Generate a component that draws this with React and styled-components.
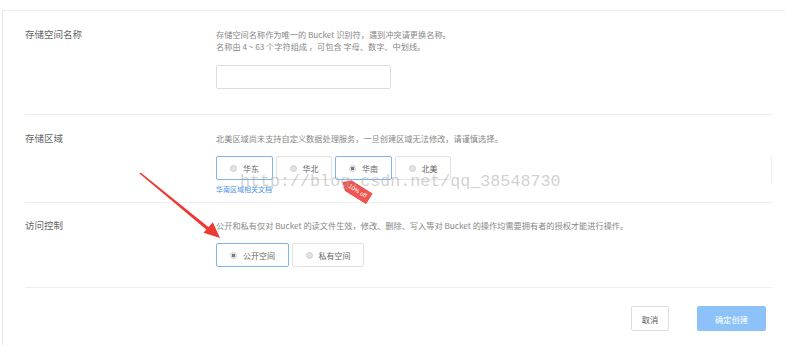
import React, { useState } from 'react';
import styled, { createGlobalStyle } from 'styled-components';

const GlobalStyle = createGlobalStyle`
  html, body {
    margin: 0;
    padding: 0;
    background: #fff;
  }
  body {
    font-family: "Noto Sans CJK SC", "Noto Sans", sans-serif;
    color: #555;
  }
`;

const regions = [
  { id: 'east', name: '华东', outlined: true },
  { id: 'north', name: '华北' },
  { id: 'south', name: '华南', outlined: true },
  { id: 'us', name: '北美' },
];

const access = [
  { id: 'public', name: '公开空间' },
  { id: 'private', name: '私有空间' },
];

const App = () => {
  const [region, setRegion] = useState('south');
  const [acl, setAcl] = useState('public');

  return (
    <Page>
      <GlobalStyle />
      <Card>
        <Section>
          <Label>存储空间名称</Label>
          <Content>
            <Desc>
              存储空间名称作为唯一的 Bucket 识别符，遇到冲突请更换名称。<br />
              名称由 4 ~ 63 个字符组成 ，可包含 字母、数字、中划线。
            </Desc>
            <NameInput type="text" />
          </Content>
        </Section>

        <Section $bottom={8}>
          <Label>存储区域</Label>
          <Content>
            <Desc>北美区域尚未支持自定义数据处理服务，一旦创建区域无法修改，请谨慎选择。</Desc>
            <RadioRow $edge>
              {regions.map((r) => (
                <RadioButton
                  key={r.id}
                  $active={r.outlined || region === r.id}
                  onClick={() => setRegion(r.id)}
                >
                  <Dot $checked={region === r.id} />
                  {r.name}
                </RadioButton>
              ))}
            </RadioRow>
            <DocLink href="#">华南区域相关文档</DocLink>
          </Content>
        </Section>

        <Section $bottom={20} $top={16}>
          <Label>访问控制</Label>
          <Content>
            <Desc>公开和私有仅对 Bucket 的读文件生效，修改、删除、写入等对 Bucket 的操作均需要拥有者的授权才能进行操作。</Desc>
            <RadioRow>
              {access.map((a) => (
                <RadioButton
                  key={a.id}
                  $active={acl === a.id}
                  onClick={() => setAcl(a.id)}
                >
                  <Dot $checked={acl === a.id} />
                  {a.name}
                </RadioButton>
              ))}
            </RadioRow>
          </Content>
        </Section>

        <Footer>
          <CancelButton>取消</CancelButton>
          <SubmitButton>确定创建</SubmitButton>
        </Footer>
      </Card>

      <Tag>10% off</Tag>
      <Watermark>http://blog.csdn.net/qq_38548730</Watermark>
      <Arrow viewBox="0 0 785 345">
        <polygon points="139.4,173.6 140.6,172.4 211.5,229.5 209.5,232.3" fill="#ec3b33" />
        <polygon points="220,238 203.5,232.8 212.8,222.3" fill="#ec3b33" />
      </Arrow>
    </Page>
  );
};

export default App;

const Page = styled.div`
  position: relative;
  width: 785px;
  height: 345px;
  overflow: hidden;
  background: #fff;
`;

const Card = styled.div`
  margin: 10px 0 0 2px;
  height: 335px;
  box-sizing: border-box;
  border-top: 1px solid #efefef;
  border-left: 1px solid #e6e6e6;
  padding: 0 13px 0 22px;
`;

const Section = styled.section`
  display: grid;
  grid-template-columns: 191px 1fr;
  padding: ${(p) => p.$top || 17}px 0 ${(p) => p.$bottom || 25}px;
  border-bottom: 1px solid #eeeeee;
`;

const Label = styled.div`
  font-size: 9.5px;
  line-height: 12px;
  color: #666;
`;

const Content = styled.div`
  display: flex;
  flex-direction: column;
  align-items: flex-start;
`;

const Desc = styled.p`
  margin: 0;
  font-size: 8.2px;
  line-height: 12px;
  color: #888;
`;

const NameInput = styled.input`
  margin-top: 13px;
  width: 175px;
  height: 24px;
  box-sizing: border-box;
  border: 1px solid #dddddd;
  border-radius: 2px;
  outline: none;
  background: #fff;
`;

const RadioRow = styled.div`
  align-self: stretch;
  display: flex;
  gap: 3px;
  margin-top: 12px;
  height: ${(p) => (p.$edge ? '27px' : 'auto')};
  border-right: ${(p) => (p.$edge ? '1px solid #eeeeee' : 'none')};
`;

const RadioButton = styled.button`
  display: flex;
  align-items: center;
  gap: 6px;
  height: 24px;
  box-sizing: border-box;
  padding: 0 12.5px 0 13px;
  border: 1px solid ${(p) => (p.$active ? '#7fb5e8' : '#e2e2e2')};
  border-radius: 2px;
  background: #fff;
  font-family: "Noto Sans CJK SC", sans-serif;
  font-size: 8px;
  color: #666;
  cursor: pointer;
`;

const Dot = styled.span`
  width: 7px;
  height: 7px;
  box-sizing: border-box;
  border-radius: 50%;
  border: 1px solid #cfcfcf;
  background: ${(p) => (p.$checked ? 'radial-gradient(circle, #777 0 1.6px, #e6e6e6 2px)' : '#e3e3e3')};
`;

const DocLink = styled.a`
  margin-top: 1px;
  font-size: 7px;
  line-height: 10px;
  color: #4a90e2;
  text-decoration: none;
`;

const Footer = styled.div`
  display: flex;
  justify-content: flex-end;
  gap: 28px;
  padding: 18px 6px 0 0;
`;

const CancelButton = styled.button`
  width: 38px;
  height: 25px;
  border: 1px solid #dcdcdc;
  border-radius: 2px;
  background: #fff;
  font-family: "Noto Sans CJK SC", sans-serif;
  font-size: 8.2px;
  color: #555;
  padding: 0;
`;

const SubmitButton = styled.button`
  width: 69px;
  height: 25px;
  border: none;
  border-radius: 2px;
  background: #8cc2f8;
  font-family: "Noto Sans CJK SC", sans-serif;
  font-size: 8.2px;
  color: #fff;
  padding: 0;
`;

const Tag = styled.span`
  position: absolute;
  left: 340px;
  top: 184px;
  width: 32px;
  height: 13px;
  background: #ef5550;
  color: #fff;
  font-family: "Liberation Sans", sans-serif;
  font-size: 6px;
  line-height: 13px;
  text-align: center;
  padding-left: 3px;
  box-sizing: border-box;
  clip-path: polygon(0 50%, 22% 0, 100% 0, 100% 100%, 22% 100%);
  transform: rotate(32deg);
`;

const Watermark = styled.div`
  position: absolute;
  left: 240px;
  top: 171px;
  font-family: "Liberation Mono", monospace;
  font-size: 16.7px;
  line-height: 22px;
  color: rgba(170, 170, 170, 0.55);
  pointer-events: none;
  white-space: nowrap;
`;

const Arrow = styled.svg`
  position: absolute;
  left: 0;
  top: 0;
  width: 785px;
  height: 345px;
  pointer-events: none;
`;
